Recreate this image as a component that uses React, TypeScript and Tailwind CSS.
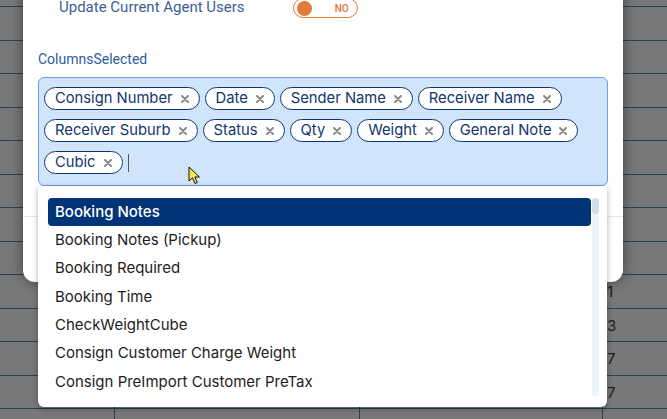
import React from 'react'

const chipRows = [
  ['Consign Number', 'Date', 'Sender Name', 'Receiver Name'],
  ['Receiver Suburb', 'Status', 'Qty', 'Weight', 'General Note'],
]

const options = [
  'Booking Notes',
  'Booking Notes (Pickup)',
  'Booking Required',
  'Booking Time',
  'CheckWeightCube',
  'Consign Customer Charge Weight',
  'Consign PreImport Customer PreTax',
]

const tableRows = ['', '', '', '', '', '', '', '', '1', '3', '7', '7', '']

const Chip: React.FC<{ label: string }> = ({ label }) => (
  <span className="flex h-[23px] items-center gap-[8px] rounded-full border border-[#0f3570] bg-white pl-[10px] pr-[10px] text-[14.75px] text-[#0f3570]">
    {label}
    <svg width="8" height="8" viewBox="0 0 8 8" className="shrink-0">
      <path d="M1 1 L7 7 M7 1 L1 7" stroke="#8c8c8c" strokeWidth="2" strokeLinecap="round" />
    </svg>
  </span>
)

export default function App() {
  return (
    <div className="relative h-[419px] w-[667px] overflow-hidden bg-[#787878] font-['Inter',sans-serif]">
      {/* background table under the backdrop */}
      <div className="pt-[6px]">
        {tableRows.map((v, i) => (
          <div key={i} className="grid h-[33.5px] grid-cols-[114px_245px_243px_1fr] border-t border-[#2f3d58]">
            <div />
            <div className={i >= 8 ? 'border-l border-[#2f3d58]' : ''} />
            <div className={i >= 8 ? 'border-l border-[#2f3d58]' : ''} />
            <div className="border-l border-[#2f3d58] pl-[4px] pt-[6px] text-[15px] text-[#1e1e1e]">{v}</div>
          </div>
        ))}
      </div>

      {/* modal */}
      <div className="absolute left-[23px] top-[-60px] h-[342px] w-[600px] rounded-xl bg-white shadow-[0_0_14px_rgba(0,0,0,0.45)]">
        <div className="flex h-[86px] items-end gap-[48px] pb-[8px] pl-[36px] font-['Roboto',sans-serif]">
          <span className="text-[15px] text-[#3b5f94]">Update Current Agent Users</span>
          <div className="flex h-[20px] w-[65px] items-center justify-between rounded-full border border-[#e07b39] pl-[3px] pr-[8px]">
            <span className="h-[15px] w-[15px] rounded-full bg-[#e07b39]" />
            <span className="text-[10px] font-medium text-[#e07b39]">NO</span>
          </div>
        </div>

        <div className="px-[15px] pt-[23px]">
          <div className="font-['Roboto',sans-serif] text-[14px] text-[#2f5c9c]">ColumnsSelected</div>
          <div className="relative mt-[7px]">
            <div className="flex h-[109px] flex-col gap-[9px] rounded-md border border-[#6b9de8] bg-[#d0e4fb] px-[5px] pt-[9px]">
              {chipRows.map((row, i) => (
                <div key={i} className="flex gap-[5px]">
                  {row.map((c) => (
                    <Chip key={c} label={c} />
                  ))}
                </div>
              ))}
              <div className="flex items-center gap-[5px]">
                <Chip label="Cubic" />
                <span className="h-[18px] w-px bg-[#555]" />
              </div>
            </div>

            {/* dropdown */}
            <div className="absolute left-0 right-[1px] top-full z-10 flex h-[221px] gap-[1px] rounded-b-md bg-white pb-[10px] pl-[10px] pr-[8px] pt-[12px] shadow-[0_2px_6px_rgba(0,0,0,0.3)]">
              <div className="flex flex-1 flex-col">
                {options.map((o, i) => (
                  <div
                    key={o}
                    className={`flex h-[28.3px] items-center rounded-[4px] px-[7px] text-[15px] ${
                      i === 0 ? 'bg-[#003477] font-medium text-white' : 'text-[#1c1c1c]'
                    }`}
                  >
                    {o}
                  </div>
                ))}
              </div>
              <div className="w-[7px] rounded-full bg-[#eef4fc]">
                <div className="h-[16px] rounded-full bg-[#d5dce4]" />
              </div>
            </div>
          </div>
        </div>

        <div className="mt-[30px] border-t border-[#e6e6e6]" />
      </div>

      {/* mouse pointer */}
      <svg className="absolute left-[188px] top-[166px] z-20" width="13" height="19" viewBox="0 0 13 19">
        <path d="M1 1 L1 15 L4.5 11.8 L7 17.5 L9.3 16.5 L6.8 11 L11.5 11 Z" fill="#f3ea4c" stroke="#111" strokeWidth="1" strokeLinejoin="round" />
      </svg>
    </div>
  )
}
